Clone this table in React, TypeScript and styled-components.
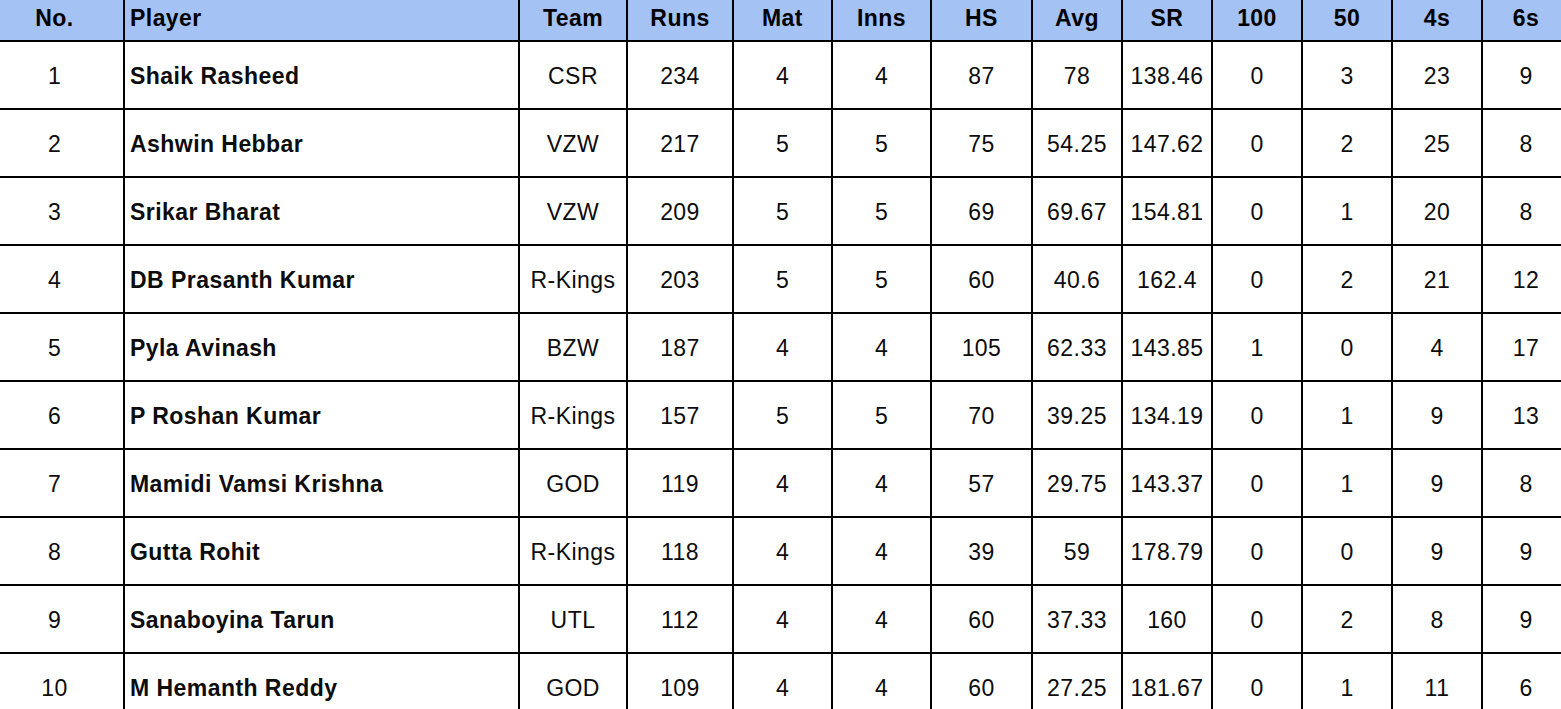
import React, { FC } from 'react';
import styled, { createGlobalStyle } from 'styled-components';

const GlobalStyle = createGlobalStyle`
  html, body {
    margin: 0;
    padding: 0;
    background: #fff;
  }
  body {
    font-family: 'Liberation Sans', Arial, sans-serif;
    color: #000;
  }
`;

const COLS = '139px 395px 108px 106px 99px 99px 101px 90px 90px 90px 90px 90px 86px';

interface IPlayer {
  name: string;
  team: string;
  runs: number;
  mat: number;
  inns: number;
  hs: number;
  avg: string;
  sr: string;
  hundreds: number;
  fifties: number;
  fours: number;
  sixes: number;
}

const players: IPlayer[] = [
  { name: 'Shaik Rasheed', team: 'CSR', runs: 234, mat: 4, inns: 4, hs: 87, avg: '78', sr: '138.46', hundreds: 0, fifties: 3, fours: 23, sixes: 9 },
  { name: 'Ashwin Hebbar', team: 'VZW', runs: 217, mat: 5, inns: 5, hs: 75, avg: '54.25', sr: '147.62', hundreds: 0, fifties: 2, fours: 25, sixes: 8 },
  { name: 'Srikar Bharat', team: 'VZW', runs: 209, mat: 5, inns: 5, hs: 69, avg: '69.67', sr: '154.81', hundreds: 0, fifties: 1, fours: 20, sixes: 8 },
  { name: 'DB Prasanth Kumar', team: 'R-Kings', runs: 203, mat: 5, inns: 5, hs: 60, avg: '40.6', sr: '162.4', hundreds: 0, fifties: 2, fours: 21, sixes: 12 },
  { name: 'Pyla Avinash', team: 'BZW', runs: 187, mat: 4, inns: 4, hs: 105, avg: '62.33', sr: '143.85', hundreds: 1, fifties: 0, fours: 4, sixes: 17 },
  { name: 'P Roshan Kumar', team: 'R-Kings', runs: 157, mat: 5, inns: 5, hs: 70, avg: '39.25', sr: '134.19', hundreds: 0, fifties: 1, fours: 9, sixes: 13 },
  { name: 'Mamidi Vamsi Krishna', team: 'GOD', runs: 119, mat: 4, inns: 4, hs: 57, avg: '29.75', sr: '143.37', hundreds: 0, fifties: 1, fours: 9, sixes: 8 },
  { name: 'Gutta Rohit', team: 'R-Kings', runs: 118, mat: 4, inns: 4, hs: 39, avg: '59', sr: '178.79', hundreds: 0, fifties: 0, fours: 9, sixes: 9 },
  { name: 'Sanaboyina Tarun', team: 'UTL', runs: 112, mat: 4, inns: 4, hs: 60, avg: '37.33', sr: '160', hundreds: 0, fifties: 2, fours: 8, sixes: 9 },
  { name: 'M Hemanth Reddy', team: 'GOD', runs: 109, mat: 4, inns: 4, hs: 60, avg: '27.25', sr: '181.67', hundreds: 0, fifties: 1, fours: 11, sixes: 6 },
];

const headers = ['No.', 'Player', 'Team', 'Runs', 'Mat', 'Inns', 'HS', 'Avg', 'SR', '100', '50', '4s', '6s'];

// the sheet is cropped on every side, so the outer borders sit off screen
const Viewport = styled.div`
  width: 100vw;
  height: 100vh;
  overflow: hidden;
`;

const Sheet = styled.div`
  width: 1583px;
  margin: -4px 0 0 -14px;
`;

const Row = styled.div<{ $head?: boolean }>`
  display: grid;
  grid-template-columns: ${COLS};
  height: ${p => (p.$head ? '46px' : '68px')};
  background: ${p => (p.$head ? '#a4c2f4' : '#fff')};
`;

const Cell = styled.div<{ $left?: boolean; $bold?: boolean }>`
  display: flex;
  align-items: center;
  justify-content: ${p => (p.$left ? 'flex-start' : 'center')};
  padding-left: ${p => (p.$left ? '5px' : '0')};
  padding-top: 2px;
  border-right: 2px solid #000;
  border-bottom: 2px solid #000;
  font-size: 23px;
  letter-spacing: 0.45px;
  font-weight: ${p => (p.$bold ? 700 : 400)};
  color: #0c0c0c;
  white-space: nowrap;
  overflow: hidden;
  &:last-child {
    border-right: none;
  }
`;

const HeadCell = styled(Cell)`
  padding-top: 0;
  font-weight: 700;
  color: #000;
`;

const PlayerRow: FC<{ rank: number; p: IPlayer }> = ({ rank, p }) => (
  <Row>
    <Cell>{rank}</Cell>
    <Cell $left $bold>{p.name}</Cell>
    <Cell>{p.team}</Cell>
    <Cell>{p.runs}</Cell>
    <Cell>{p.mat}</Cell>
    <Cell>{p.inns}</Cell>
    <Cell>{p.hs}</Cell>
    <Cell>{p.avg}</Cell>
    <Cell>{p.sr}</Cell>
    <Cell>{p.hundreds}</Cell>
    <Cell>{p.fifties}</Cell>
    <Cell>{p.fours}</Cell>
    <Cell>{p.sixes}</Cell>
  </Row>
);

const App: FC = () => (
  <>
    <GlobalStyle />
    <Viewport>
      <Sheet>
        <Row $head>
          {headers.map(h => (
            <HeadCell key={h} $left={h === 'Player'}>{h}</HeadCell>
          ))}
        </Row>
        {players.map((p, i) => (
          <PlayerRow key={p.name} rank={i + 1} p={p} />
        ))}
      </Sheet>
    </Viewport>
  </>
);

export default App;
